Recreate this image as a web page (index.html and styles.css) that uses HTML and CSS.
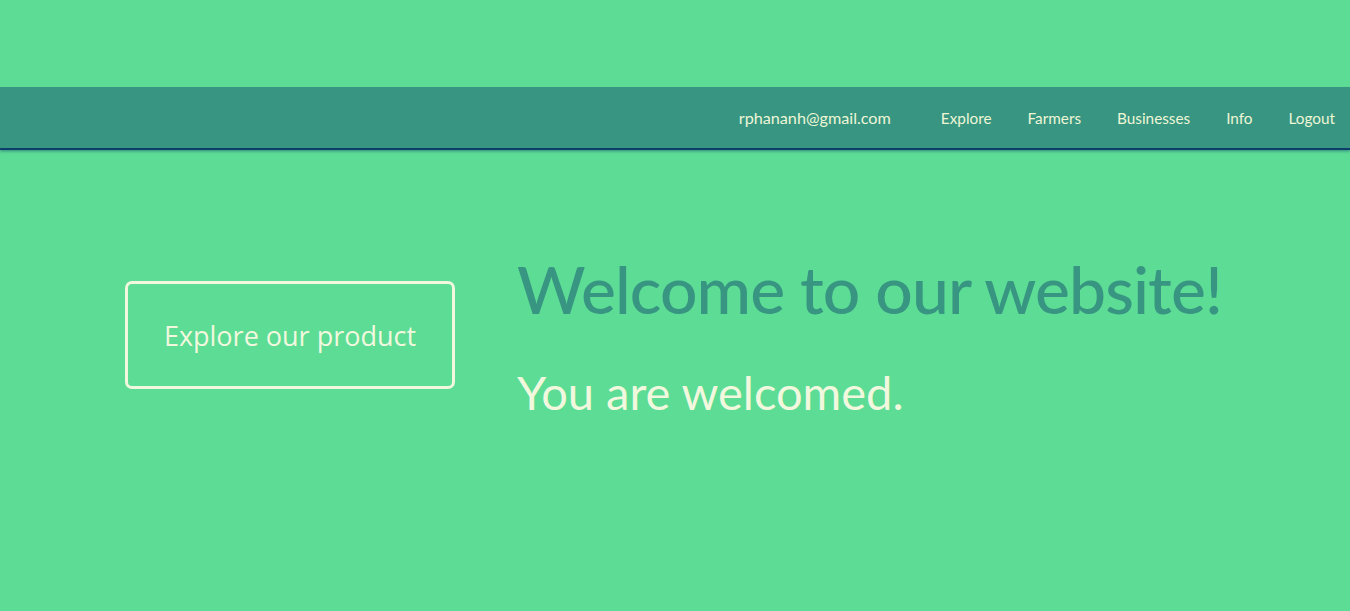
FILE: index.html
```html
<!DOCTYPE html>
<html>
<head>
<meta charset="utf-8">
<link rel="stylesheet" href="styles.css">
</head>
<body>
<div class="top-space"></div>
<nav class="navbar">
  <span class="user">rphananh@gmail.com</span>
  <ul class="links">
    <li>Explore</li>
    <li>Farmers</li>
    <li>Businesses</li>
    <li>Info</li>
    <li>Logout</li>
  </ul>
</nav>
<main class="hero">
  <div class="cta-col">
    <button class="cta">Explore our product</button>
  </div>
  <div class="text-col">
    <h1 class="title">Welcome to our website!</h1>
    <p class="subtitle">You are welcomed.</p>
  </div>
</main>
</body>
</html>
```
FILE: styles.css
```css
html, body {
  margin: 0;
  padding: 0;
  background: #5cdc95;
  height: 100%;
  overflow: hidden;
}
body {
  font-family: "Lato", "DejaVu Sans", sans-serif;
}
.top-space {
  height: 87px;
}
.navbar {
  height: 61px;
  background: #379581;
  display: flex;
  align-items: center;
  justify-content: flex-end;
  padding-right: 15px;
  box-shadow: 0 2px 0 #0d3f6b, 0 3px 3px rgba(20, 70, 110, 0.6);
  color: #eef6d6;
  font-size: 15.3px;
}
.user {
  margin-right: 50px;
  font-size: 16.2px;
}
.links {
  list-style: none;
  display: flex;
  gap: 36px;
  margin: 0;
  padding: 0;
}
.hero {
  display: flex;
  align-items: flex-start;
  padding-top: 100px;
}
.cta-col {
  width: 517px;
  padding-left: 125px;
  box-sizing: border-box;
  padding-top: 33px;
}
.cta {
  width: 330px;
  height: 108px;
  border: 3px solid #f1f8de;
  border-radius: 7px;
  background: transparent;
  color: #f1f8de;
  font-family: "Open Sans", sans-serif;
  font-size: 27px;
  padding: 0;
}
.text-col {
  padding-top: 8px;
}
.title {
  margin: 0;
  font-weight: 500;
  font-size: 66px;
  color: #379581;
  line-height: 1;
  letter-spacing: -0.9px;
}
.subtitle {
  margin: 47px 0 0;
  font-size: 47px;
  color: #f1f8de;
  line-height: 1;
  font-weight: 400;
}
```
